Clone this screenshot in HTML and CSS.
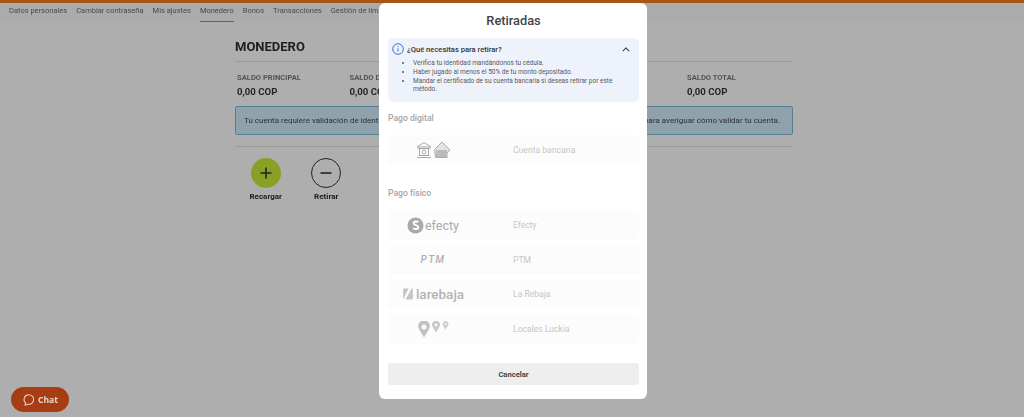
FILE: index.html
```html
<!DOCTYPE html>
<html lang="es">
<head>
    <meta charset="UTF-8">
    <meta name="viewport" content="width=device-width, initial-scale=1.0">
    <title>Monedero</title>
    <link rel="stylesheet" href="styles.css">
</head>
<body>
<div class="page">
    <nav class="tabs">
        <a>Datos personales</a>
        <a>Cambiar contraseña</a>
        <a>Mis ajustes</a>
        <a class="active">Monedero</a>
        <a>Bonos</a>
        <a>Transacciones</a>
        <a>Gestión de límites</a>
    </nav>

    <main class="wallet">
        <h1>MONEDERO</h1>
        <div class="balances">
            <div class="balance"><span>SALDO PRINCIPAL</span><b>0,00 COP</b></div>
            <div class="balance"><span>SALDO DEPORTES</span><b>0,00 COP</b></div>
            <div class="balance"><span>SALDO BONOS</span><b>0,00 COP</b></div>
            <div class="balance"><span>SALDO CASINO</span><b>0,00 COP</b></div>
            <div class="balance"><span>SALDO TOTAL</span><b>0,00 COP</b></div>
        </div>
        <div class="notice">Tu cuenta requiere validación de identidad. Por favor ponte en contacto con nosotros o visita aquí nuestra ayuda para averiguar cómo validar tu cuenta.</div>
        <div class="actions">
            <div class="action">
                <span class="circle plus">
                    <svg viewBox="0 0 30 30" width="30" height="30"><path d="M15 9.500v11M9.500 15h11" /></svg>
                </span>
                <span class="action-name">Recargar</span>
            </div>
            <div class="action">
                <span class="circle minus">
                    <svg viewBox="0 0 30 30" width="30" height="30"><path d="M9.500 15h11" /></svg>
                </span>
                <span class="action-name">Retirar</span>
            </div>
        </div>
    </main>

    <div class="overlay"></div>

    <button class="chat">
        <svg viewBox="0 0 14 14" width="13" height="13"><path d="M7.500 2a5 5 0 0 1 0 10H6.700c-1 .6-2.200.9-3.400.8.5-.6.8-1.200.8-1.900A5 5 0 0 1 7.500 2z" /></svg>
        Chat
    </button>

    <section class="modal">
        <h2>Retiradas</h2>

        <div class="info">
            <div class="info-head">
                <svg class="info-icon" viewBox="0 0 12 12" width="12" height="12">
                    <circle cx="6" cy="6" r="5.300" />
                    <path d="M6 5.400v3M6 3.300v.9" />
                </svg>
                <strong>¿Qué necesitas para retirar?</strong>
                <svg class="chevron" viewBox="0 0 10 6" width="8" height="5"><path d="M1 5l4-4 4 4" /></svg>
            </div>
            <ul>
                <li>Verifica tu identidad mandándonos tu cédula.</li>
                <li>Haber jugado al menos el 50% de tu monto depositado.</li>
                <li>Mandar el certificado de su cuenta bancaria si deseas retirar por este método.</li>
            </ul>
        </div>

        <h3>Pago digital</h3>
        <div class="method first">
            <div class="logo">
                <svg viewBox="0 0 35 18" width="35" height="18">
                    <g class="bank">
                        <path d="M1 6l7-4.500L15 6z" />
                        <path d="M2 7.500h12M3.500 8v6M12.500 8v6M2.500 14.500h11M1 16.500h14" />
                        <circle cx="8" cy="11" r="2" />
                    </g>
                    <path class="card-back" d="M18.500 8.500L26 1l8 8-3 3v4.500H19.500z" />
                    <rect class="card-front" x="20" y="9" width="11" height="7" />
                </svg>
            </div>
            <span>Cuenta bancaria</span>
        </div>

        <h3 class="second">Pago físico</h3>
        <div class="method first">
            <div class="logo efecty">
                <svg viewBox="0 0 18 18" width="17" height="17">
                    <circle cx="9" cy="9" r="8.500" />
                    <path d="M12 5.500c-1-1-5-1.200-5 1.200 0 2.400 5 1.600 5 4.200 0 2.400-4 2.200-5.500 1" />
                </svg>
                <em>efecty</em>
            </div>
            <span>Efecty</span>
        </div>
        <div class="method">
            <div class="logo ptm"><em>PTM</em></div>
            <span>PTM</span>
        </div>
        <div class="method">
            <div class="logo rebaja">
                <svg viewBox="0 0 10 10" width="12" height="12">
                    <path d="M1 9.500L1 1.500Q1 .5 2 .5H5.500L1 9.500zM3 9.500L8 .5H9V8.500Q9 9.500 8 9.500z" />
                </svg>
                <em>larebaja</em>
            </div>
            <span>La Rebaja</span>
        </div>
        <div class="method">
            <div class="logo pins">
                <svg viewBox="0 0 31 17" width="31" height="17">
                    <path class="pin-a" fill-rule="evenodd" d="M6 16.500L1 8.200A5.800 5.800 0 1 1 11 8.200zM6 3.500a2.500 2.500 0 1 0 0 5 2.500 2.500 0 0 0 0-5z" />
                    <path class="pin-b" fill-rule="evenodd" d="M18 11.500L14.700 5.800A3.900 3.900 0 1 1 21.300 5.800zM18 2.500a1.500 1.500 0 1 0 0 3 1.500 1.500 0 0 0 0-3z" />
                    <path class="pin-c" fill-rule="evenodd" d="M27.500 8.500L25 4.600A2.900 2.900 0 1 1 30 4.600zM27.500 2a1 1 0 1 0 0 2 1 1 0 0 0 0-2z" />
                </svg>
            </div>
            <span>Locales Luckia</span>
        </div>

        <button class="cancel">Cancelar</button>
    </section>
</div>
</body>
</html>
```

FILE: styles.css
```css
html, body {
    margin: 0;
    padding: 0;
    height: 100%;
    overflow: hidden;
}

body {
    font-family: Roboto, "Liberation Sans", sans-serif;
    background: #fafafa;
}

.page {
    position: relative;
    height: 417px;
    overflow: hidden;
    filter: blur(0.45px);
}

/* top tabs */

.tabs {
    display: flex;
    gap: 9px;
    height: 19px;
    padding-left: 9px;
    border-top: 3px solid #ef7a22;
    background: #f5f5f5;
    font-size: 7.500px;
    line-height: 15px;
    color: #6a6a6a;
    white-space: nowrap;
}

.tabs a {
    height: 19px;
    box-sizing: border-box;
}

.tabs .active {
    border-bottom: 1px solid #f0691f;
    color: #666;
}

/* wallet */

.wallet {
    width: 558px;
    margin-left: 235px;
    color: #333;
}

h1 {
    margin: 0;
    height: 40px;
    box-sizing: border-box;
    padding-top: 17px;
    border-bottom: 1px solid #ddd;
    font-size: 13px;
    line-height: 16px;
    font-weight: 700;
    color: #2e2e2e;
}

.balances {
    display: grid;
    grid-template-columns: repeat(5, 112.500px);
    padding: 11px 0 0 2px;
    height: 32px;
}

.balance span {
    display: block;
    font-size: 7.600px;
    line-height: 10px;
    font-weight: 700;
    color: #777;
}

.balance b {
    display: block;
    margin-top: 2px;
    font-size: 9.600px;
    line-height: 13px;
    color: #333;
}

.notice {
    margin-top: 1px;
    height: 29px;
    box-sizing: border-box;
    padding-left: 8px;
    border: 1px solid #79b8d6;
    border-radius: 2px;
    background: #cde9f5;
    font-size: 8px;
    line-height: 27px;
    color: #444;
    white-space: nowrap;
    overflow: hidden;
}

.actions {
    display: flex;
    gap: 27px;
    margin-top: 11px;
    padding: 11px 0 0 14px;
    border-top: 1px solid #ddd;
}

.action {
    display: flex;
    flex-direction: column;
    align-items: center;
    width: 33.500px;
}

.circle {
    display: block;
    width: 30px;
    height: 30px;
    box-sizing: border-box;
    border-radius: 50%;
}

.circle svg {
    display: block;
    fill: none;
    stroke: #333;
    stroke-width: 1.600;
}

.plus {
    background: #c5e637;
}

.minus {
    border: 1px solid #333;
}

.minus svg {
    margin: -1px;
}

.action-name {
    margin-top: 3px;
    font-size: 8px;
    line-height: 12px;
    font-weight: 700;
    color: #2b2b2b;
    white-space: nowrap;
}

/* dim layer */

.overlay {
    position: absolute;
    inset: 0;
    background: rgba(0, 0, 0, 0.3);
}

.chat {
    position: absolute;
    left: 11px;
    top: 387px;
    display: flex;
    align-items: center;
    gap: 3px;
    width: 58px;
    height: 25px;
    padding: 0 0 0 11px;
    border: none;
    border-radius: 12.500px;
    background: #a83c12;
    color: #e8d8d0;
    font-family: "Open Sans", sans-serif;
    font-size: 8.500px;
    font-weight: 700;
}

.chat svg {
    fill: none;
    stroke: #e8d8d0;
    stroke-width: 1.100;
}

/* modal */

.modal {
    position: absolute;
    left: 379px;
    top: 3px;
    width: 268px;
    height: 396px;
    box-sizing: border-box;
    padding: 0 8px 0 9px;
    border-radius: 6px;
    background: #fff;
    display: flex;
    flex-direction: column;
}

h2 {
    margin: 0;
    height: 35px;
    font-size: 12.800px;
    line-height: 36px;
    font-weight: 500;
    text-align: center;
    color: #444;
}

.info {
    height: 64px;
    box-sizing: border-box;
    padding: 4px 8px 0 4px;
    border-radius: 5px;
    background: #eef2fb;
}

.info-head {
    display: flex;
    align-items: center;
    gap: 3px;
    height: 12px;
    padding-top: 1px;
    font-size: 7.600px;
    color: #333;
}

.info-head strong {
    font-weight: 500;
    flex: 1;
}

.info-icon {
    fill: none;
    stroke: #3c6fd0;
    stroke-width: 1;
}

.chevron {
    fill: none;
    stroke: #333;
    stroke-width: 1.300;
    margin-right: 1px;
}

.info ul {
    margin: 4px 0 0;
    padding: 0 0 0 21px;
    font-size: 6.500px;
    line-height: 8.800px;
    color: #595959;
}

h3 {
    margin: 11px 0 0;
    height: 22px;
    font-size: 8.600px;
    line-height: 10px;
    font-weight: 500;
    color: #a5a5a5;
}

h3.second {
    margin-top: 23px;
    height: 22px;
}

.method {
    display: grid;
    grid-template-columns: 90px 1fr;
    column-gap: 35px;
    align-items: center;
    height: 30px;
    margin-top: 4.700px;
    border-radius: 3px;
    background: #fcfcfc;
    font-size: 8.600px;
    color: #c6c6c6;
}

.method.first {
    margin-top: 0;
}

.logo {
    display: flex;
    align-items: center;
    justify-content: center;
    gap: 1px;
}

.logo svg {
    display: block;
}

.logo em {
    font-style: normal;
    color: #b0b0b0;
}

.bank {
    fill: none;
    stroke: #aaa;
    stroke-width: 1;
}

.card-back {
    fill: #e2e2e2;
    stroke: #aaa;
}

.card-front {
    fill: #bbb;
}

.efecty svg circle {
    fill: #a9a9a9;
}

.efecty svg path {
    fill: none;
    stroke: #fff;
    stroke-width: 2;
}

.efecty em {
    font-size: 12.500px;
    color: #aaa;
}

.ptm em {
    font-size: 10px;
    font-style: italic;
    font-weight: 500;
    letter-spacing: 1.500px;
    color: #b0b0b0;
}

.rebaja svg {
    fill: #c4c4c4;
    margin-right: 1px;
}

.rebaja em {
    font-size: 13.500px;
    font-weight: 500;
    color: #b4b4b4;
}

.pin-a {
    fill: #c2c2c2;
}

.pin-b {
    fill: #c6c6c6;
}

.pin-c {
    fill: #cbcbcb;
}

.cancel {
    height: 22px;
    margin-top: 19px;
    border: none;
    border-radius: 2px;
    background: #eee;
    font-family: inherit;
    font-size: 7.600px;
    font-weight: 700;
    color: #444;
}
```
